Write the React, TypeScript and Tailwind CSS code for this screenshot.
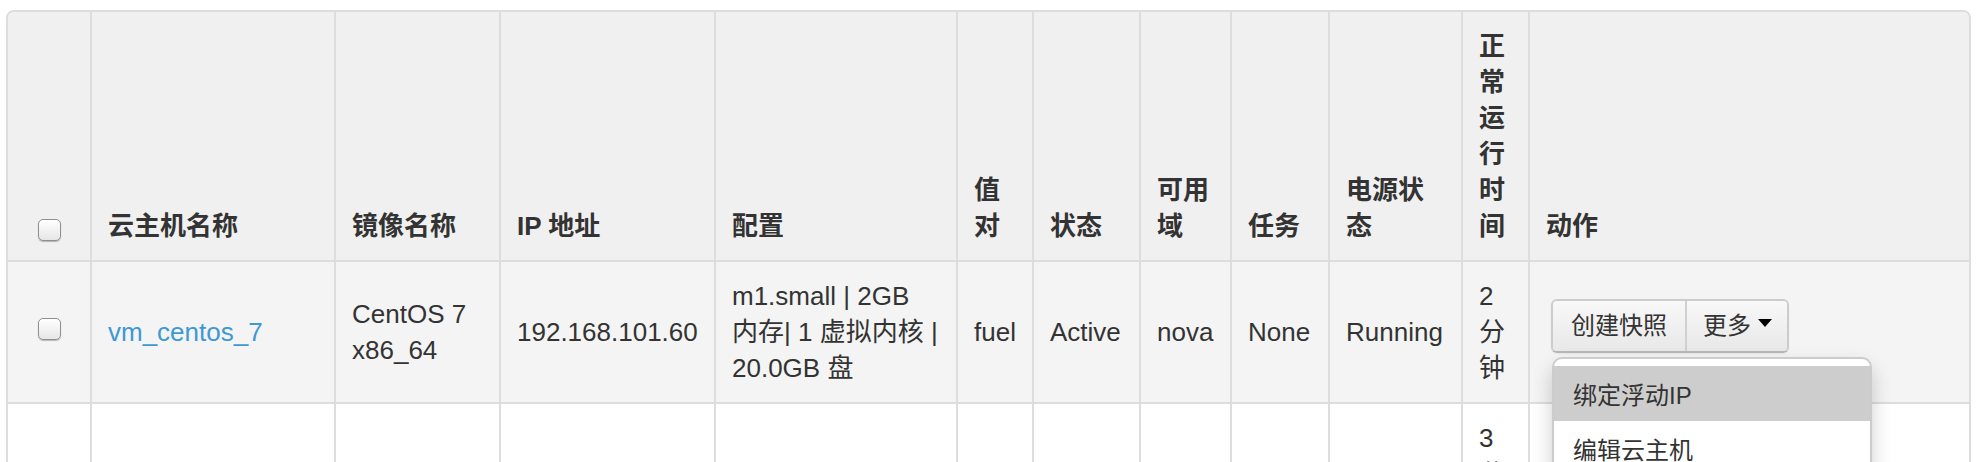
import React from "react";

const FONT = "font-['Liberation_Sans','Noto_Sans_CJK_SC',sans-serif]";

function Checkbox({ className = "" }: { className?: string }) {
  return (
    <span
      className={`block w-[23px] h-[22px] rounded-[5px] border border-[#8f8f8f] bg-linear-to-b from-white to-[#e6e6e6] shadow-[0_1px_1px_rgba(0,0,0,0.25)] ${className}`}
    />
  );
}

const headers: string[] = [
  "云主机名称",
  "镜像名称",
  "IP 地址",
  "配置",
  "值对",
  "状态",
  "可用域",
  "任务",
  "电源状态",
  "正常运行时间",
  "动作",
];

export default function App() {
  const th =
    "bg-[#f0f0f0] border-l-2 border-[#dddddd] px-4 py-4 flex flex-col justify-end font-bold";
  const td =
    "bg-[#f4f4f4] border-l-2 border-t-2 border-[#dddddd] px-4 py-4 flex flex-col justify-center";
  const td2 = "bg-white border-l-2 border-t-2 border-[#dddddd] px-4 py-4 flex flex-col";

  return (
    <div
      className={`h-[462px] w-[1988px] overflow-hidden bg-white ${FONT} text-[26px] leading-[36px] text-[#333333]`}
    >
      <div className="pt-[10px] pl-[6px]">
        <div className="relative w-[1965px] rounded-t-[8px] border-2 border-[#dddddd] grid grid-cols-[82px_244px_165px_215px_242px_76px_107px_91px_98px_133px_67px_441px]">
          {/* header */}
          <div className="bg-[#f0f0f0] rounded-tl-[6px] py-4 flex flex-col justify-end items-center">
            <Checkbox className="mb-[3px]" />
          </div>
          {headers.map((h, i) => (
            <div
              key={h}
              className={`${th} ${i === headers.length - 1 ? "rounded-tr-[6px]" : ""}`}
            >
              <span>{h}</span>
            </div>
          ))}

          {/* row 1 */}
          <div className="bg-[#f4f4f4] border-t-2 border-[#dddddd] py-4 flex flex-col justify-center items-center">
            <Checkbox className="mb-[6px]" />
          </div>
          <div className={td}>
            <span className="text-[#3d98d4]">vm_centos_7</span>
          </div>
          <div className={td}>
            <span>CentOS 7 x86_64</span>
          </div>
          <div className={td}>
            <span>192.168.101.60</span>
          </div>
          <div className={td}>
            <span>
              m1.small | 2GB
              <br />
              内存| 1 虚拟内核 |
              <br />
              20.0GB 盘
            </span>
          </div>
          <div className={td}>
            <span>fuel</span>
          </div>
          <div className={td}>
            <span>Active</span>
          </div>
          <div className={td}>
            <span>nova</span>
          </div>
          <div className={td}>
            <span>None</span>
          </div>
          <div className={td}>
            <span>Running</span>
          </div>
          <div className={td}>
            <span>2 分钟</span>
          </div>
          <div className="bg-[#f4f4f4] border-l-2 border-t-2 border-[#dddddd] pl-[21px] pt-[37px] flex flex-col items-start">
            <div className="relative z-10">
              <div className="flex rounded-[6px] border-2 border-[#cccccc] border-b-[#b8b8b8] text-[24px] leading-[36px] text-[#333333] shadow-[0_1px_2px_rgba(0,0,0,0.06)]">
                <span className="px-[18px] py-[7px] rounded-l-[4px] bg-linear-to-b from-[#f8f8f8] to-[#e8e8e8]">
                  创建快照
                </span>
                <span className="flex items-start pl-[16px] pr-[15px] py-[7px] rounded-r-[4px] border-l-2 border-[#d0d0d0] bg-linear-to-b from-[#f8f8f8] to-[#e8e8e8]">
                  更多
                  <span className="ml-[7px] mt-[11px] w-0 h-0 border-t-[8px] border-t-black border-x-[7px] border-x-transparent" />
                </span>
              </div>
              <div className="absolute left-[1px] top-full mt-[4px] w-[320px] rounded-[10px] border-2 border-[rgba(0,0,0,0.2)] bg-white pt-[7px] pb-[10px] shadow-[0_10px_20px_rgba(0,0,0,0.2)] text-[24px] leading-[36px] text-[#333333]">
                <div className="h-[55px] flex items-center pt-[4px] px-[19px] bg-[#cdcdcd]">
                  绑定浮动IP
                </div>
                <div className="h-[55px] flex items-center pt-[4px] px-[19px]">
                  编辑云主机
                </div>
                <div className="h-[55px] flex items-center pt-[4px] px-[19px]">
                  查看日志
                </div>
              </div>
            </div>
          </div>

          {/* row 2 */}
          <div className="bg-white border-t-2 border-[#dddddd] py-4" />
          <div className={td2} />
          <div className={td2} />
          <div className={td2} />
          <div className={td2} />
          <div className={td2} />
          <div className={td2} />
          <div className={td2} />
          <div className={td2} />
          <div className={td2} />
          <div className={td2}>
            <span>3 分钟</span>
          </div>
          <div className={td2} />
        </div>
      </div>
    </div>
  );
}
